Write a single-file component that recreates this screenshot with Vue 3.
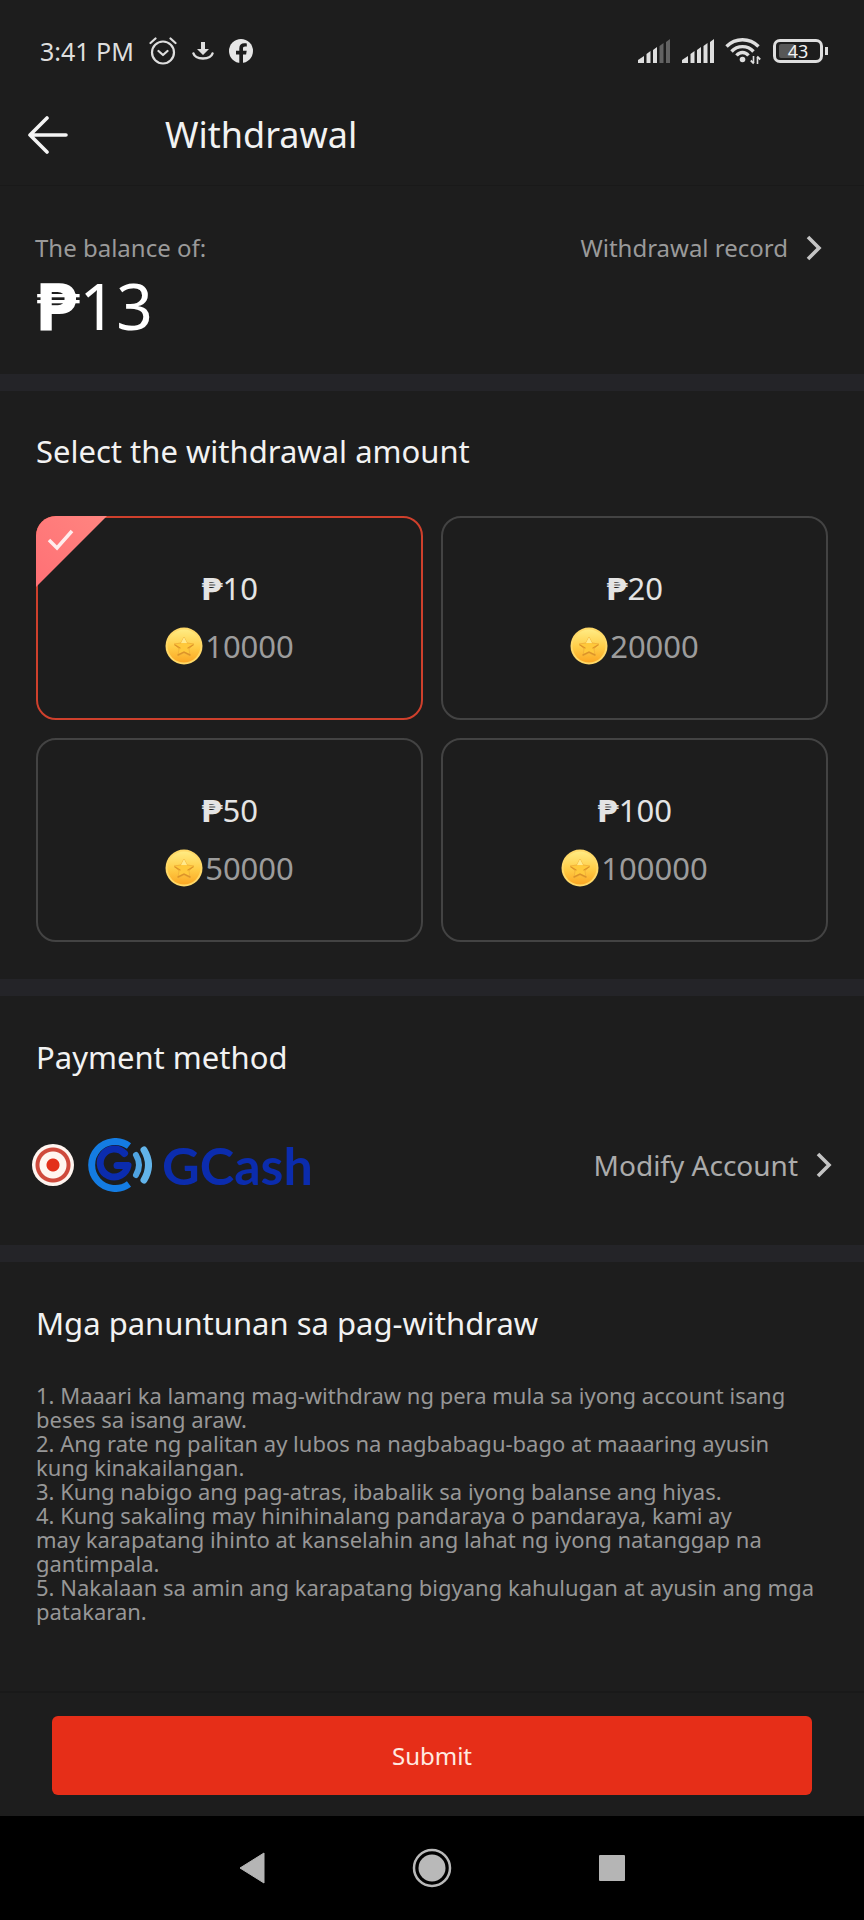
<script setup>
import { ref } from 'vue'

const amounts = [
  { pesos: '10', coins: '10000' },
  { pesos: '20', coins: '20000' },
  { pesos: '50', coins: '50000' },
  { pesos: '100', coins: '100000' },
]
const selected = ref('10')
const method = ref('gcash')

const rules = [
  '1. Maaari ka lamang mag-withdraw ng pera mula sa iyong account isang\nbeses sa isang araw.',
  '2. Ang rate ng palitan ay lubos na nagbabagu-bago at maaaring ayusin\nkung kinakailangan.',
  '3. Kung nabigo ang pag-atras, ibabalik sa iyong balanse ang hiyas.',
  '4. Kung sakaling may hinihinalang pandaraya o pandaraya, kami ay\nmay karapatang ihinto at kanselahin ang lahat ng iyong natanggap na\ngantimpala.',
  '5. Nakalaan sa amin ang karapatang bigyang kahulugan at ayusin ang mga\npatakaran.',
]
</script>

<template>
  <div class="screen">
    <div class="status">
      <div class="status-left">
        <span class="clock">3:41 PM</span>
        <svg width="28" height="28" viewBox="0 0 28 28" fill="none" stroke="#dedede" stroke-width="2.2" stroke-linecap="round" stroke-linejoin="round">
          <circle cx="14" cy="15.5" r="11" />
          <path d="M9.5 14l4.5 4 4.5-4M1.5 6l5-4.500M26.500 6l-5-4.500" />
        </svg>
        <svg class="download" width="22" height="20" viewBox="0 0 22 20">
          <path d="M9 1h4v7h4l-6 6-6-6h4z" fill="#dedede" />
          <path d="M1.500 12.500c2 6.500 17 6.500 19 0" fill="none" stroke="#dedede" stroke-width="2.500" stroke-linecap="round" />
        </svg>
        <svg width="24" height="24" viewBox="0 0 24 24">
          <circle cx="12" cy="12" r="12" fill="#e6e6e6" />
          <path d="M10.300 24v-8.500H7v-3.700h3.300V9.200c0-3.300 2-5 5-5 1 0 2 .1 2.500.2v3.100h-1.700c-1.600 0-2.100.8-2.100 2v2.300h3.700l-.6 3.700H14V24z" fill="#1d1d1d" />
        </svg>
      </div>
      <div class="status-right">
        <svg width="34" height="24" viewBox="0 0 34 24" fill="#dedede">
          <path d="M1 24v-3l6-4v7zM9.500 24v-9l4-3v12zM16 24V11l4-3v16z" />
          <path d="M22.500 24V7l4-3v20zM29 24V3l4-3v24z" fill="#626262" />
        </svg>
        <svg width="34" height="24" viewBox="0 0 34 24" fill="#dedede">
          <path d="M1 24v-3l6-4v7zM9.500 24v-9l4-3v12zM16 24V11l4-3v16zM22.500 24V7l4-3v20zM29 24V3l4-3v24z" />
        </svg>
        <svg class="wifi" width="36" height="28" viewBox="0 0 36 28" fill="none" stroke="#dedede" stroke-width="3.400">
          <path d="M1.500 9.500c9-9 23-9 32 0M6.500 14.500c6-6.500 16-6.500 22 0M11.500 18.500c3.500-4 8.500-4 12 0" />
          <circle cx="17.500" cy="22.500" r="2.800" fill="#dedede" stroke="none" />
          <path d="M28.500 19v7M32.500 20v7" stroke-width="1.600" />
          <path d="M28.800 26.500l-3-3M32.200 19.500l3 3" stroke-width="1.800" />
        </svg>
        <span class="battery"><span class="charge"></span><span class="percent">43</span></span>
      </div>
    </div>

    <header class="header">
      <button class="back" type="button" aria-label="Back">
        <svg width="40" height="38" viewBox="0 0 40 38" fill="none" stroke="#f4f4f4" stroke-width="3.600" stroke-linecap="round" stroke-linejoin="round">
          <path d="M38 19H2M19 2L2 19l17 17" />
        </svg>
      </button>
      <h1>Withdrawal</h1>
    </header>

    <section class="balance">
      <div>
        <p class="caption">The balance of:</p>
        <p class="total"><span class="peso">₱</span>13</p>
      </div>
      <a class="record" href="#record">
        Withdrawal record
        <svg width="16" height="26" viewBox="0 0 16 26" fill="none" stroke="#c4c4c4" stroke-width="3.600"><path d="M2 2l11 11L2 24" /></svg>
      </a>
    </section>

    <section class="block amounts">
      <h2 id="amount-title">Select the withdrawal amount</h2>
      <div class="grid" role="radiogroup" aria-labelledby="amount-title">
        <label v-for="a in amounts" :key="a.pesos" class="card" :class="{ active: selected === a.pesos }">
          <input v-model="selected" type="radio" name="amount" :value="a.pesos" />
          <svg v-if="selected === a.pesos" class="corner" width="71" height="71" viewBox="0 0 71 71">
            <defs>
              <linearGradient id="corner-fill" x1="0" y1="1" x2="1" y2="0">
                <stop offset="0" stop-color="#ff7075" />
                <stop offset="1" stop-color="#ff8580" />
              </linearGradient>
            </defs>
            <path d="M0 71V20A20 20 0 0 1 20 0h51z" fill="url(#corner-fill)" />
            <path d="M13 24l8 8 15-17" fill="none" stroke="#ffeded" stroke-width="3.500" />
          </svg>
          <span class="pesos"><span class="peso">₱</span>{{ a.pesos }}</span>
          <span class="coins">
            <svg width="38" height="38" viewBox="0 0 38 38">
              <defs>
                <linearGradient id="coin-face" x1="0" y1="0" x2="0" y2="1">
                  <stop offset="0" stop-color="#ffeb83" />
                  <stop offset=".55" stop-color="#ffcc45" />
                  <stop offset="1" stop-color="#fba724" />
                </linearGradient>
              </defs>
              <circle cx="19" cy="19" r="18.500" fill="#ffd968" />
              <circle cx="19" cy="19" r="16.500" fill="url(#coin-face)" />
              <path d="M19 10l3 6 7 1-5 5 1 7-6-3-6 3 1-7-5-5 7-1z" fill="#ffc93b" stroke="#f3b43a" stroke-width="1" stroke-linejoin="round" />
              <path d="M10 18l5 3M28 18l-5 3M13 28l6-3 6 3" fill="none" stroke="#dd942a" stroke-width="1.400" stroke-linecap="round" />
              <path d="M16 16l3-6 3 6" fill="#ffe98c" />
            </svg>{{ a.coins }}
          </span>
        </label>
      </div>
    </section>

    <section class="block payment">
      <h2>Payment method</h2>
      <div class="method">
        <label class="gcash">
          <input v-model="method" type="radio" name="method" value="gcash" />
          <svg width="64" height="54" viewBox="0 0 64 54" fill="none" stroke-linecap="round">
            <path d="M41 8A23.500 23.500 0 1 0 41 46" stroke="#147ce2" stroke-width="7" stroke-linecap="butt" />
            <path d="M36.500 15.500A14 14 0 1 0 40 27.500H29" stroke="#0b2cae" stroke-width="7" stroke-linejoin="round" />
            <path d="M48 17q6 10 0 20" stroke="#4fa3e0" stroke-width="6" />
            <path d="M56 12q9 15 0 30" stroke="#62b4ea" stroke-width="7" />
          </svg>
          <span class="wordmark">GCash</span>
        </label>
        <a class="modify" href="#account">
          Modify Account
          <svg width="16" height="26" viewBox="0 0 16 26" fill="none" stroke="#c4c4c4" stroke-width="3.600"><path d="M2 2l11 11L2 24" /></svg>
        </a>
      </div>
    </section>

    <section class="block rules">
      <h2>Mga panuntunan sa pag-withdraw</h2>
      <ul>
        <li v-for="rule in rules" :key="rule">{{ rule }}</li>
      </ul>
    </section>

    <div class="footer">
      <button class="submit" type="button">Submit</button>
    </div>

    <nav class="system">
      <button type="button" aria-label="Back">
        <svg width="26" height="32" viewBox="0 0 26 32"><path d="M25 1v30L1 16z" fill="#b5b5b5" stroke="#b5b5b5" stroke-linejoin="round" /></svg>
      </button>
      <button type="button" aria-label="Home">
        <svg width="40" height="40" viewBox="0 0 40 40"><circle cx="20" cy="20" r="18" fill="none" stroke="#b9b9b9" stroke-width="2.500" /><circle cx="20" cy="20" r="13.500" fill="#b9b9b9" /></svg>
      </button>
      <button type="button" aria-label="Recent apps">
        <svg width="26" height="26" viewBox="0 0 26 26"><rect width="26" height="26" rx="1" fill="#b5b5b5" /></svg>
      </button>
    </nav>
  </div>
</template>

<style>
body {
  margin: 0;
  background: #1d1d1d;
}
</style>

<style scoped>
.screen {
  display: flex;
  flex-direction: column;
  min-height: 100vh;
  background: #1d1d1d;
  color: #f2f2f2;
  font-family: "Noto Sans", "Open Sans", sans-serif;
}
* {
  box-sizing: border-box;
}
svg {
  display: block;
  flex: none;
}
button {
  padding: 0;
  border: 0;
  background: none;
  font: inherit;
  cursor: pointer;
}
h1,
h2,
p,
ul {
  margin: 0;
  padding: 0;
}
a {
  color: inherit;
  text-decoration: none;
}
.status {
  display: flex;
  justify-content: space-between;
  align-items: center;
  height: 84px;
  padding: 18px 36px 0 40px;
}
.status-left,
.status-right {
  display: flex;
  align-items: center;
}
.status-left {
  gap: 15px;
}
.status-right {
  gap: 10px;
}
.clock {
  color: #dedede;
  font-size: 25px;
  line-height: 32px;
}
.battery {
  position: relative;
  width: 50px;
  height: 24px;
  margin: 0 5px 0 2px;
  border: 3px solid #dedede;
  border-radius: 7px;
  text-align: center;
}
.battery::after {
  content: "";
  position: absolute;
  top: 5px;
  right: -8px;
  width: 3px;
  height: 8px;
  background: #dedede;
}
.charge {
  position: absolute;
  top: 2px;
  left: 3px;
  width: 16px;
  height: 14px;
  border-radius: 2px;
  background: #575757;
}
.percent {
  position: relative;
  display: block;
  font-size: 18px;
  line-height: 18px;
}
.header {
  display: flex;
  align-items: center;
  gap: 97px;
  height: 102px;
  padding: 0 28px;
  border-bottom: 1px solid #191919;
}
h1 {
  font-size: 36px;
  font-weight: 400;
  line-height: 48px;
}
.balance {
  display: flex;
  justify-content: space-between;
  align-items: flex-start;
  padding: 46px 42px 28px 35px;
}
.caption,
.record {
  color: #9a9a9a;
  font-size: 24px;
  line-height: 32px;
}
.total {
  margin-top: 4px;
  color: #fff;
  font-size: 64px;
  line-height: 76px;
}
.peso {
  font-family: "DejaVu Sans", sans-serif;
  font-weight: 700;
}
.record,
.modify {
  display: flex;
  align-items: center;
  gap: 18px;
}
.block {
  padding: 0 36px;
  border-top: 17px solid #242428;
}
h2 {
  font-size: 31px;
  font-weight: 400;
  line-height: 40px;
}
.amounts {
  padding: 40px 36px 37px;
}
.grid {
  display: grid;
  grid-template-columns: 1fr 1fr;
  gap: 18px;
  margin-top: 45px;
}
.card {
  position: relative;
  display: flex;
  flex-direction: column;
  align-items: center;
  gap: 17px;
  padding: 50px 0 52px;
  border: 2px solid #434343;
  border-radius: 20px;
  cursor: pointer;
}
.card.active {
  border-color: #cf402c;
}
.card input {
  position: absolute;
  inset: 0;
  margin: 0;
  appearance: none;
  cursor: pointer;
}
.corner {
  position: absolute;
  top: -2px;
  left: -2px;
}
.pesos,
.coins {
  font-size: 31px;
  line-height: 40px;
}
.pesos {
  color: #e4e4e4;
}
.coins {
  display: flex;
  align-items: center;
  gap: 2px;
  color: #9c9c9c;
}
.payment {
  padding-top: 41px;
  padding-bottom: 52px;
}
.method {
  display: flex;
  justify-content: space-between;
  align-items: center;
  margin: 60px -4px 0;
}
.gcash {
  display: flex;
  align-items: center;
  cursor: pointer;
}
.gcash input {
  width: 42px;
  height: 42px;
  margin: 0 14px 0 0;
  border-radius: 50%;
  appearance: none;
  background: radial-gradient(circle, #e3301b 6px, #fff5f0 7px, #fff5f0 13px, #cf4a3c 14px, #cf4a3c 17px, #fff5f0 18px);
}
.wordmark {
  margin-left: 10px;
  color: #0b2cae;
  font-family: Lato, sans-serif;
  font-size: 52px;
  font-weight: 700;
  line-height: 56px;
}
.modify {
  color: #ababab;
  font-size: 28px;
  line-height: 40px;
}
.rules {
  flex: 1;
  padding-top: 41px;
  padding-bottom: 48px;
}
.rules ul {
  margin-top: 40px;
  list-style: none;
  color: #979797;
  font-size: 22px;
  line-height: 24px;
  white-space: pre-line;
}
.footer {
  padding: 23px 52px 21px;
  border-top: 2px solid #191919;
}
.submit {
  display: block;
  width: 100%;
  height: 79px;
  border-radius: 6px;
  background: #e62e18;
  color: #ffeae0;
  font-size: 24px;
}
.system {
  display: flex;
  justify-content: center;
  align-items: center;
  gap: 147px;
  height: 104px;
  background: #000;
}
</style>
